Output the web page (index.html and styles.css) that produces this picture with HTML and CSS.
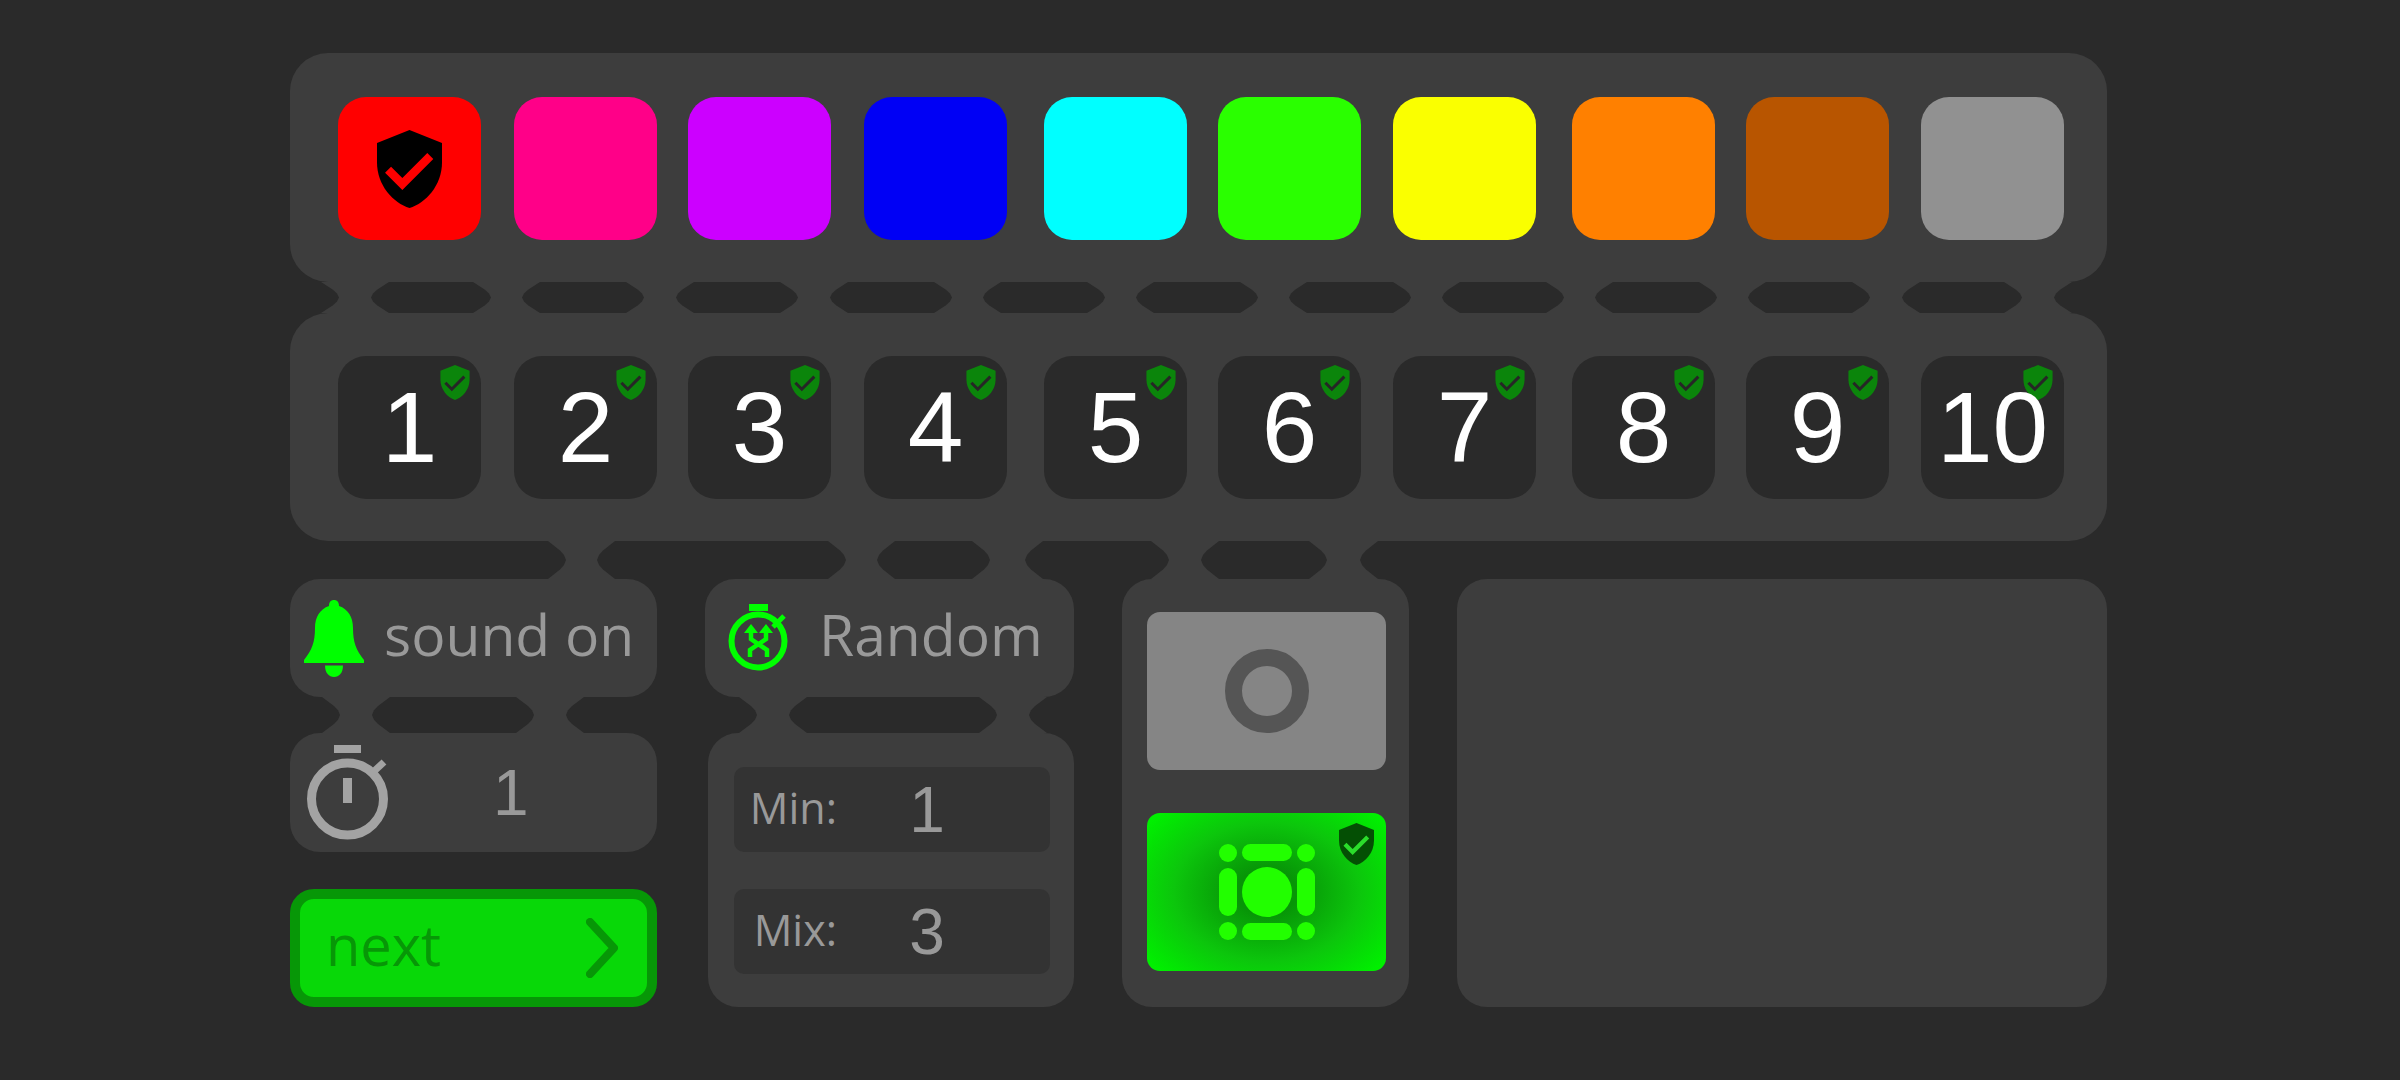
FILE: index.html
```html
<!DOCTYPE html>
<html>
<head>
    <meta name="viewport" content="width=device-width, initial-scale=1">
    <title>Lighting controls</title>
    <link rel="stylesheet" href="styles.css">
</head>
<body>
    <svg class="defs" width="0" height="0" aria-hidden="true">
        <symbol id="shield" viewBox="0 0 20 24">
            <path class="shield-body" d="M10 0L20 4V10C20 17 15 22.5 10 24C5 22.5 0 17 0 10V4Z"/>
            <path class="shield-check" d="M3.4 12.2L7.8 16.6L16.4 8" fill="none"/>
        </symbol>
    </svg>

    <main class="board">
        <section class="panel panel-row">
            <div class="tile-row">
                <div class="tile swatch red"><svg class="shield-big"><use href="#shield"/></svg></div>
                <div class="tile swatch pink"></div>
                <div class="tile swatch purple"></div>
                <div class="tile swatch blue"></div>
                <div class="tile swatch cyan"></div>
                <div class="tile swatch green"></div>
                <div class="tile swatch yellow"></div>
                <div class="tile swatch orange"></div>
                <div class="tile swatch brown"></div>
                <div class="tile swatch grey"></div>
            </div>
        </section>

        <div class="strip strip-top">
            <i class="pill pill-open-left"></i><span></span>
            <i class="pill"></i><span></span>
            <i class="pill"></i><span></span>
            <i class="pill"></i><span></span>
            <i class="pill"></i><span></span>
            <i class="pill"></i><span></span>
            <i class="pill"></i><span></span>
            <i class="pill"></i><span></span>
            <i class="pill"></i><span></span>
            <i class="pill"></i><span></span>
            <i class="pill"></i><span></span>
            <i class="pill"></i><span></span>
            <i class="pill pill-open-right"></i>
        </div>

        <section class="panel panel-row panel-numbers">
            <div class="tile-row">
                <div class="tile number"><svg class="shield-small"><use href="#shield"/></svg><b>1</b></div>
                <div class="tile number"><svg class="shield-small"><use href="#shield"/></svg><b>2</b></div>
                <div class="tile number"><svg class="shield-small"><use href="#shield"/></svg><b>3</b></div>
                <div class="tile number"><svg class="shield-small"><use href="#shield"/></svg><b>4</b></div>
                <div class="tile number"><svg class="shield-small"><use href="#shield"/></svg><b>5</b></div>
                <div class="tile number"><svg class="shield-small"><use href="#shield"/></svg><b>6</b></div>
                <div class="tile number"><svg class="shield-small"><use href="#shield"/></svg><b>7</b></div>
                <div class="tile number"><svg class="shield-small"><use href="#shield"/></svg><b>8</b></div>
                <div class="tile number"><svg class="shield-small"><use href="#shield"/></svg><b>9</b></div>
                <div class="tile number"><svg class="shield-small"><use href="#shield"/></svg><b>10</b></div>
            </div>
        </section>

        <div class="strip strip-mid">
            <i class="pill pill-open-left"></i><span></span>
            <i class="pill"></i><span></span>
            <i class="pill"></i><span></span>
            <i class="pill"></i><span></span>
            <i class="pill"></i><span></span>
            <i class="pill pill-open-right"></i>
        </div>

        <div class="lower">
            <div class="column">
                <div class="panel small-panel sound">
                    <svg class="bell" viewBox="0 0 60 77">
                        <path d="M30 0C33 0 35 2 35 6C44 9 49 17 49 28C49 42 52 50 60 60V63H0V60C8 50 11 42 11 28C11 17 16 9 25 6C25 2 27 0 30 0Z"/>
                        <path d="M21 65.500H39C39 73 35 77 30 77C25 77 21 73 21 65.500Z"/>
                    </svg>
                    <span class="label">sound on</span>
                </div>
                <div class="strip strip-sound">
                    <i class="pill pill-open-left"></i><span></span>
                    <i class="pill"></i><span></span>
                    <i class="pill pill-open-right"></i>
                </div>
                <div class="panel small-panel timer">
                    <svg class="timer-icon" viewBox="0 0 90 96">
                        <rect x="28" y="0" width="27" height="8"/>
                        <circle cx="41.500" cy="54" r="36" fill="none" stroke-width="9"/>
                        <rect x="37" y="33" width="9" height="25"/>
                        <path d="M64 30L78 17" fill="none" stroke-width="7"/>
                    </svg>
                    <span class="timer-value">1</span>
                </div>
                <button class="next">
                    <span>next</span>
                    <svg class="chevron" viewBox="0 0 32 60">
                        <path d="M4 4L28 30L4 56" fill="none" stroke-width="8" stroke-linecap="round" stroke-linejoin="round"/>
                    </svg>
                </button>
            </div>

            <div class="column">
                <div class="panel small-panel random">
                    <svg class="random-icon" viewBox="0 0 70 80">
                        <rect x="24" y="4" width="19" height="7"/>
                        <circle cx="33" cy="41" r="26.500" fill="none" stroke-width="6"/>
                        <path d="M48 27L59 16" fill="none" stroke-width="5"/>
                        <path d="M25 57V50L41 39V31M42 57V50L26 39V31" fill="none" stroke-width="4.500"/>
                        <path d="M19 33L26 24L33 33ZM34 33L41 24L48 33Z"/>
                    </svg>
                    <span class="label">Random</span>
                </div>
                <div class="strip strip-random">
                    <i class="pill pill-open-left"></i><span></span>
                    <i class="pill"></i><span></span>
                    <i class="pill pill-open-right"></i>
                </div>
                <div class="panel range">
                    <div class="field"><label>Min:</label><span>1</span></div>
                    <div class="field"><label>Mix:</label><span>3</span></div>
                </div>
            </div>

            <div class="panel modes">
                <button class="mode mode-off">
                    <svg class="ring" viewBox="0 0 84 84"><circle cx="42" cy="42" r="33.500" fill="none" stroke-width="17"/></svg>
                </button>
                <button class="mode mode-on">
                    <svg class="mode-icon" viewBox="0 0 96 96">
                        <circle cx="9" cy="9" r="9"/>
                        <rect x="23" y="0" width="50" height="17" rx="8.500"/>
                        <circle cx="87" cy="9" r="9"/>
                        <rect x="0" y="24" width="18" height="48" rx="9"/>
                        <circle cx="48" cy="48" r="25"/>
                        <rect x="78" y="24" width="18" height="48" rx="9"/>
                        <circle cx="9" cy="87" r="9"/>
                        <rect x="23" y="79" width="50" height="17" rx="8.500"/>
                        <circle cx="87" cy="87" r="9"/>
                    </svg>
                    <svg class="shield-mode"><use href="#shield"/></svg>
                </button>
            </div>

            <div class="panel display"></div>
        </div>
    </main>
</body>
</html>
```

FILE: styles.css
```css
:root {
    --bg: #2a2a2a;
    --panel: #3d3d3d;
    --muted: #999999;
    --dark-green: #079707;
    font-family: "Liberation Sans", sans-serif;
}

html, body {
    height: 100%;
    margin: 0;
    background: var(--bg);
    overflow: hidden;
}

.defs {
    position: absolute;
}

.board {
    width: 1817px;
    padding: 53px 0 0 290px;
}

.panel {
    background: var(--panel);
    border-radius: 30px;
}

.panel-row {
    height: 229px;
    padding: 44px 0 0 48px;
    box-sizing: border-box;
    border-radius: 38px;
}

.panel-numbers {
    height: 228px;
    padding-top: 43px;
}

.tile-row {
    display: flex;
}

.tile {
    position: relative;
    flex: none;
    width: 143px;
    height: 143px;
    margin-left: 31px;
    border-radius: 28px;
}

.tile:first-child { margin-left: 0; }
.tile:nth-child(2), .tile:nth-child(4) { margin-left: 33px; }
.tile:nth-child(5) { margin-left: 37px; }
.tile:nth-child(7), .tile:nth-child(10) { margin-left: 32px; }
.tile:nth-child(8) { margin-left: 36px; }

.red { background: #ff0000; }
.pink { background: #ff0088; }
.purple { background: #cc00ff; }
.blue { background: #0000f5; }
.cyan { background: #00ffff; }
.green { background: #2aff00; }
.yellow { background: #faff00; }
.orange { background: #ff8000; }
.brown { background: #b85500; }
.grey { background: #919191; }

.number {
    display: flex;
    align-items: center;
    justify-content: center;
    background: var(--bg);
    color: #fff;
    font-size: 100px;
}

.number b {
    position: relative;
    font-weight: normal;
}

.shield-body { fill: var(--shield, #000); }
.shield-check { stroke: var(--check, #f00); stroke-width: var(--check-width, 2.1); }

.shield-big {
    display: block;
    width: 65px;
    height: 78px;
    margin: 33px 0 0 39px;
    --shield: #000;
    --check: #ff0000;
    --check-width: 2.6;
}

.shield-small {
    position: absolute;
    top: 9px;
    right: 11px;
    width: 30px;
    height: 35px;
    --shield: #0b850b;
    --check: #262626;
}

.shield-mode {
    position: absolute;
    top: 10px;
    right: 12px;
    width: 35px;
    height: 42px;
    --shield: #044f04;
    --check: #2bdd2b;
    --check-width: 2.4;
}

/* bands that tie the panels together, dark pills cut out of the panel colour */
.strip {
    display: grid;
    background: var(--panel);
}

.strip-top {
    height: 31px;
    grid-template-columns: 49px 32px 120px 31px 122px 32px 122px 32px 122px 31px 122px 31px 122px 31px 122px 31px 122px 31px 122px 31px 122px 32px 120px 32px 1fr;
}

.strip-mid {
    height: 38px;
    grid-template-columns: 276px 31px 249px 31px 113px 35px 144px 32px 126px 33px 1fr;
}

.strip-sound {
    height: 36px;
    grid-template-columns: 50px 32px 162px 32px 1fr;
}

.strip-random {
    height: 36px;
    grid-template-columns: 52px 32px 208px 32px 1fr;
}

.pill {
    display: block;
    background: var(--bg);
    clip-path: polygon(18px 0, calc(100% - 18px) 0, calc(100% - 6px) 25%, calc(100% - 2px) 37%, 100% 50%, calc(100% - 2px) 63%, calc(100% - 6px) 75%, calc(100% - 18px) 100%, 18px 100%, 6px 75%, 2px 63%, 0 50%, 2px 37%, 6px 25%);
}

.pill-open-left {
    clip-path: polygon(0 0, calc(100% - 18px) 0, calc(100% - 6px) 25%, calc(100% - 2px) 37%, 100% 50%, calc(100% - 2px) 63%, calc(100% - 6px) 75%, calc(100% - 18px) 100%, 0 100%);
}

.pill-open-right {
    clip-path: polygon(18px 0, 100% 0, 100% 100%, 18px 100%, 6px 75%, 2px 63%, 0 50%, 2px 37%, 6px 25%);
}

.lower {
    display: grid;
    grid-template-columns: 367px 369px 287px 650px;
    column-gap: 48px;
}

.small-panel {
    display: flex;
    align-items: center;
    height: 118px;
    box-sizing: border-box;
}

.label {
    margin-top: -8px;
    color: var(--muted);
    font-family: "Open Sans", sans-serif;
    font-size: 57px;
}

.sound {
    padding-left: 14px;
}

.bell {
    width: 60px;
    height: 77px;
    margin-right: 20px;
    fill: #00ff00;
}

.timer {
    height: 119px;
    padding-left: 16px;
}

.timer-icon {
    width: 90px;
    height: 96px;
    fill: #a3a3a3;
    stroke: #a3a3a3;
    stroke-width: 0;
}

.timer-value {
    margin-left: 97px;
    color: var(--muted);
    font-size: 64px;
}

.next {
    display: flex;
    align-items: center;
    justify-content: space-between;
    width: 100%;
    height: 118px;
    margin-top: 37px;
    padding: 0 29px 0 26px;
    box-sizing: border-box;
    background: #08d808;
    border: 10px solid var(--dark-green);
    border-radius: 24px;
    color: var(--dark-green);
    font-family: "Open Sans", sans-serif;
    font-size: 56px;
}

.next span {
    margin-top: -8px;
}

.chevron {
    width: 32px;
    height: 60px;
    stroke: var(--dark-green);
}

.random {
    padding-left: 20px;
}

.random-icon {
    width: 70px;
    height: 80px;
    margin: 3px 24px 0 0;
    fill: #00ff00;
    stroke: #00ff00;
    stroke-width: 0;
}

.range {
    height: 274px;
    margin: 0 0 0 3px;
    padding: 34px 24px 0 26px;
    box-sizing: border-box;
}

.field {
    display: flex;
    align-items: center;
    height: 85px;
    margin-bottom: 37px;
    background: #333333;
    border-radius: 10px;
    color: var(--muted);
}

.field label {
    width: 103px;
    margin-top: -5px;
    text-align: right;
    font-family: "Open Sans", sans-serif;
    font-size: 43px;
}

.field span {
    width: 60px;
    margin-left: 60px;
    text-align: center;
    font-size: 64px;
}

.modes {
    height: 428px;
    padding: 33px 23px 0 25px;
    box-sizing: border-box;
    display: flex;
    flex-direction: column;
    gap: 43px;
}

.mode {
    position: relative;
    display: flex;
    align-items: center;
    justify-content: center;
    width: 239px;
    height: 158px;
    padding: 0;
    border: 0;
    border-radius: 13px;
}

.mode-off {
    background: #858585;
}

.ring {
    width: 84px;
    height: 84px;
    stroke: #555555;
}

.mode-on {
    background: radial-gradient(ellipse 150px 112px at center, #079507 20%, #0cc60c 62%, #00f000 100%);
}

.mode-icon {
    width: 96px;
    height: 96px;
    fill: #22ff00;
}

.display {
    height: 428px;
}
```
